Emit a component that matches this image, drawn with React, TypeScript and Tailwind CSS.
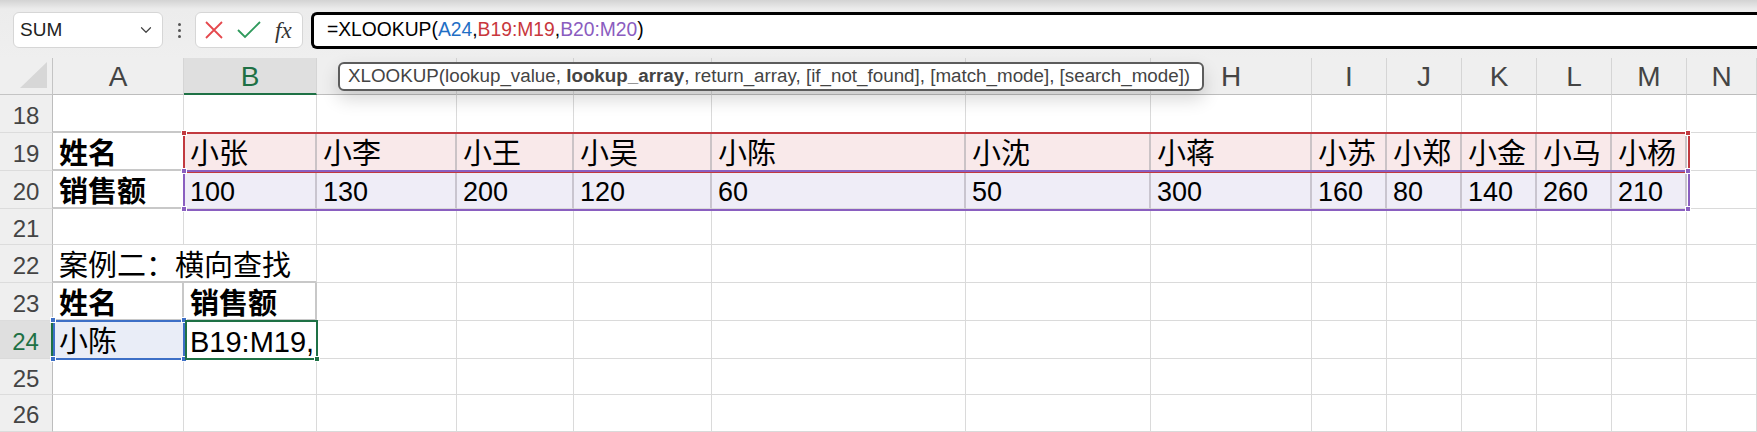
import { ChevronDown } from 'lucide-react';

const GRID =
  'grid grid-cols-[53px_131px_133px_140px_117px_138px_254px_185px_161px_75px_75px_75px_75px_75px_1fr]';
const COLS = ['A', 'B', 'C', 'D', 'E', 'F', 'G', 'H', 'I', 'J', 'K', 'L', 'M', 'N'];
const BAND = COLS.slice(1, 13);

const names = ['小张', '小李', '小王', '小吴', '小陈', '小沈', '小蒋', '小苏', '小郑', '小金', '小马', '小杨'];
const sales = ['100', '130', '200', '120', '60', '50', '300', '160', '80', '140', '260', '210'];

const rows = [
  { n: 18, h: 'h-[38px]' },
  { n: 19, h: 'h-[38px]' },
  { n: 20, h: 'h-[38px]' },
  { n: 21, h: 'h-[36px]' },
  { n: 22, h: 'h-[38px]' },
  { n: 23, h: 'h-[38px]' },
  { n: 24, h: 'h-[38px]' },
  { n: 25, h: 'h-[36px]' },
  { n: 26, h: 'h-[37px]' },
];

type Cell = { text?: string; bold?: boolean; num?: boolean };

function content(r: number, c: string): Cell {
  if (r === 19 && c === 'A') return { text: '姓名', bold: true };
  if (r === 20 && c === 'A') return { text: '销售额', bold: true };
  if (r === 19 && BAND.includes(c)) return { text: names[BAND.indexOf(c)] };
  if (r === 20 && BAND.includes(c)) return { text: sales[BAND.indexOf(c)], num: true };
  if (r === 22 && c === 'A') return { text: '案例二：横向查找' };
  if (r === 23 && c === 'A') return { text: '姓名', bold: true };
  if (r === 23 && c === 'B') return { text: '销售额', bold: true };
  if (r === 24 && c === 'A') return { text: '小陈' };
  if (r === 24 && c === 'B') return { text: 'B19:M19,' };
  return {};
}

function cellClass(r: number, c: string) {
  if (r === 19 && BAND.includes(c))
    return 'bg-[#f9e9ea] border-r-2 border-r-[#cbc3c6] border-b border-b-[#dadada]';
  if (r === 20 && BAND.includes(c))
    return 'bg-[#efedf7] border-r-2 border-r-[#c9c5cf] border-b border-b-[#dadada]';
  if (c === 'A' && r >= 18 && r <= 20) return 'border-r border-r-[#dadada] border-b-2 border-b-[#c8c8c8]';
  if (r === 22 && c === 'A') return 'border-b-2 border-b-[#c8c8c8]';
  if (r === 22 && c === 'B') return 'border-r border-r-[#dadada] border-b-2 border-b-[#c8c8c8]';
  if (r === 23 && (c === 'A' || c === 'B')) return 'border-r-2 border-r-[#c8c8c8] border-b-2 border-b-[#c8c8c8]';
  if (r === 24 && c === 'A') return 'bg-[#e9edf7] border-r border-b border-[#dadada]';
  return 'border-r border-b border-[#dadada]';
}

function Handle({ className }: { className: string }) {
  return <div className={`absolute h-[6px] w-[6px] border border-white ${className}`} />;
}

export default function App() {
  return (
    <div className="relative h-[432px] w-[1757px] overflow-hidden bg-white font-['Liberation_Sans','Noto_Sans_CJK_SC',sans-serif] text-black">
      {/* formula bar */}
      <div className="flex h-[58px] items-start bg-[linear-gradient(to_bottom,#d3d3d3_0px,#ececec_9px,#efefef_100%)] pl-[13px] pt-[12px]">
        <div className="flex h-[36px] w-[150px] items-center justify-between rounded-[6px] border border-[#d6d6d6] bg-white pl-[6px] pr-[7px]">
          <span className="text-[19px] text-[#222]">SUM</span>
          <ChevronDown size={18} strokeWidth={1.6} className="text-[#444]" />
        </div>
        <div className="flex h-[36px] w-[32px] flex-col items-center justify-center gap-[3px]">
          <span className="h-[3px] w-[3px] rounded-full bg-[#555]" />
          <span className="h-[3px] w-[3px] rounded-full bg-[#555]" />
          <span className="h-[3px] w-[3px] rounded-full bg-[#555]" />
        </div>
        <div className="flex h-[36px] w-[108px] items-center rounded-[6px] border border-[#d6d6d6] bg-white pl-[8px]">
          <svg width="20" height="20" viewBox="0 0 20 20" className="mr-[13px]">
            <path d="M2 2 L18 18 M18 2 L2 18" stroke="#e5484d" strokeWidth="1.8" fill="none" />
          </svg>
          <svg width="24" height="20" viewBox="0 0 24 20" className="mr-[14px]">
            <path d="M1 10 L8 17 L23 2" stroke="#2f9a5c" strokeWidth="1.8" fill="none" />
          </svg>
          <span className="font-['Liberation_Serif',serif] text-[23px] italic leading-none text-[#333]">fx</span>
        </div>
        <div className="ml-[8px] flex h-[37px] flex-1 items-center rounded-l-[6px] border-[3px] border-r-0 border-black bg-white pl-[13px] text-[19.3px]">
          <span>=XLOOKUP(</span>
          <span className="text-[#1f6fc5]">A24</span>
          <span>,</span>
          <span className="text-[#c8373d]">B19:M19</span>
          <span>,</span>
          <span className="text-[#8a5cc0]">B20:M20</span>
          <span>)</span>
        </div>
      </div>

      {/* column headers */}
      <div className={`${GRID} h-[37px] bg-[#efefef] text-[28px] leading-none text-[#444]`}>
        <div className="flex items-end justify-end border-b border-r border-[#c4c4c4] pb-[6px] pr-[4px]">
          <svg width="28" height="26" viewBox="0 0 28 26">
            <path d="M27 0 L27 26 L0 26 Z" fill="#d7d7d7" />
          </svg>
        </div>
        {COLS.map((c) =>
          c === 'B' ? (
            <div
              key={c}
              className="flex items-center justify-center border-b-2 border-r border-b-[#1e7145] border-r-[#d5d5d5] bg-[#dfdfdf] pt-[2px] text-[#1e7145]"
            >
              {c}
            </div>
          ) : (
            <div key={c} className="flex items-center justify-center border-b border-r border-b-[#bdbdbd] border-r-[#d5d5d5] pt-[2px]">
              {c}
            </div>
          ),
        )}
      </div>

      {/* rows */}
      {rows.map((row) => (
        <div key={row.n} className={`${GRID} ${row.h} leading-none`}>
          {row.n === 24 ? (
            <div className="flex items-center justify-center border-b border-r-2 border-b-[#dadada] border-r-[#1e7145] bg-[#dfdfdf] pt-[4px] text-[24px] text-[#1e7145]">
              {row.n}
            </div>
          ) : (
            <div className="flex items-center justify-center border-b border-r border-b-[#dcdcdc] border-r-[#bdbdbd] bg-[#efefef] pt-[4px] text-[24px] text-[#444]">
              {row.n}
            </div>
          )}
          {COLS.map((c) => {
            const v = content(row.n, c);
            return (
              <div
                key={c}
                className={`flex items-center whitespace-nowrap pl-[6px] pt-[6px] ${v.num ? 'text-[27px]' : 'text-[29px]'} ${cellClass(
                  row.n,
                  c,
                )} ${v.bold ? 'font-bold' : ''}`}
              >
                {v.text}
              </div>
            );
          })}
        </div>
      ))}

      {/* function tooltip */}
      <div className="absolute left-[338px] top-[62px] flex h-[29px] w-[866px] items-center whitespace-nowrap rounded-[6px] border-2 border-[#5c5c5c] bg-white pl-[8px] text-[18.8px] text-[#444] shadow-[0_8px_18px_rgba(0,0,0,0.16)]">
        XLOOKUP(lookup_value,&nbsp;<b className="font-bold">lookup_array</b>, return_array, [if_not_found], [match_mode], [search_mode])
      </div>

      {/* reference range outlines */}
      <div className="absolute left-[183px] top-[132px] h-[41px] w-[1507px] border-2 border-[#c2393f]" />
      <div className="absolute left-[183px] top-[170px] h-[41px] w-[1507px] border-2 border-[#8a5fc0]" />
      <Handle className="left-[181px] top-[130px] bg-[#c2393f]" />
      <Handle className="left-[1685px] top-[130px] bg-[#c2393f]" />
      <Handle className="left-[181px] top-[168px] bg-[#8a5fc0]" />
      <Handle className="left-[1685px] top-[168px] bg-[#8a5fc0]" />
      <Handle className="left-[181px] top-[206px] bg-[#8a5fc0]" />
      <Handle className="left-[1685px] top-[206px] bg-[#8a5fc0]" />

      <div className="absolute left-[53px] top-[320px] h-[40px] w-[132px] border-2 border-[#3d6fc6]" />
      <Handle className="left-[50px] top-[317px] bg-[#3d6fc6]" />
      <Handle className="left-[181px] top-[317px] bg-[#3d6fc6]" />
      <Handle className="left-[50px] top-[356px] bg-[#3d6fc6]" />
      <Handle className="left-[181px] top-[356px] bg-[#3d6fc6]" />

      <div className="absolute left-[185px] top-[320px] h-[40px] w-[133px] border-2 border-[#1e7145]" />
      <Handle className="left-[314px] top-[356px] bg-[#1e7145]" />
    </div>
  );
}
